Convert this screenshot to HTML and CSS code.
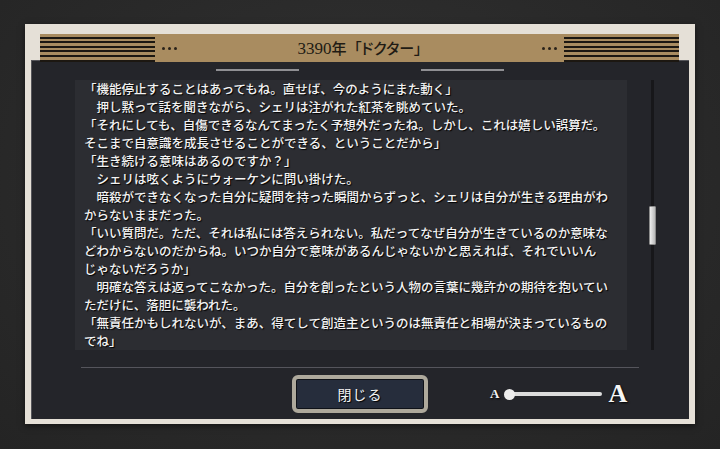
FILE: index.html
```html
<!DOCTYPE html>
<html lang="ja">
<head>
    <meta charset="UTF-8">
    <meta name="viewport" content="width=device-width, initial-scale=1.0">
    <title>3390年 「ドクター」</title>
    <link rel="stylesheet" href="styles.css">
</head>
<body>
    <div class="frame">
        <div class="header">
            <div class="stripes"></div>
            <div class="dots"><span></span><span></span><span></span></div>
            <h1 class="title"><span class="num">3390</span>年 <span class="name">「ドクター」</span></h1>
            <div class="dots"><span></span><span></span><span></span></div>
            <div class="stripes"></div>
        </div>
        <div class="panel">
            <div class="deco"><span></span><span></span></div>
            <div class="reader">
                <div class="text">
                    <p>「機能停止することはあってもね。直せば、今のようにまた動く」</p>
                    <p>　押し黙って話を聞きながら、シェリは注がれた紅茶を眺めていた。</p>
                    <p>「それにしても、自傷できるなんてまったく予想外だったね。しかし、これは嬉しい誤算だ。<br>そこまで自意識を成長させることができる、ということだから」</p>
                    <p>「生き続ける意味はあるのですか？」</p>
                    <p>　シェリは呟くようにウォーケンに問い掛けた。</p>
                    <p>　暗殺ができなくなった自分に疑問を持った瞬間からずっと、シェリは自分が生きる理由がわ<br>からないままだった。</p>
                    <p>「いい質問だ。ただ、それは私には答えられない。私だってなぜ自分が生きているのか意味な<br>どわからないのだからね。いつか自分で意味があるんじゃないかと思えれば、それでいいん<br>じゃないだろうか」</p>
                    <p>　明確な答えは返ってこなかった。自分を創ったという人物の言葉に幾許かの期待を抱いてい<br>ただけに、落胆に襲われた。</p>
                    <p>「無責任かもしれないが、まあ、得てして創造主というのは無責任と相場が決まっているもの<br>でね」</p>
                </div>
                <div class="scrollbar">
                    <div class="thumb"></div>
                </div>
            </div>
            <div class="separator"></div>
            <div class="controls">
                <button class="close-btn">閉じる</button>
                <div class="size-slider">
                    <span class="size-small">A</span>
                    <span class="knob"></span>
                    <span class="track"></span>
                    <span class="size-big">A</span>
                </div>
            </div>
        </div>
    </div>
</body>
</html>
```

FILE: styles.css
```css
body {
    margin: 0;
    width: 720px;
    height: 449px;
    overflow: hidden;
    background: radial-gradient(ellipse at 50% 40%, #323232 0%, #2a2a2a 55%, #242424 100%);
    font-family: "Noto Sans CJK JP", sans-serif;
}
.frame {
    box-sizing: border-box;
    width: 670px;
    height: 400px;
    margin: 24px 0 0 25px;
    padding: 10px 6px 5px 6px;
    background: #e5e0d7;
    box-shadow: 0 2px 6px rgba(0, 0, 0, 0.5);
}
.header {
    position: relative;
    z-index: 1;
    display: flex;
    align-items: center;
    height: 28px;
    margin: 0 10px 0 9px;
    background: #a98c60;
}
.stripes {
    width: 115px;
    height: 100%;
    background: repeating-linear-gradient(to bottom, #a98c60 0, #a98c60 2.6px, #1c1711 2.6px, #1c1711 4.6px);
}
.dots {
    display: flex;
    gap: 3px;
    margin: 0 7px;
}
.dots span {
    width: 3px;
    height: 3px;
    border-radius: 50%;
    background: #2a221a;
}
.title {
    flex: 1;
    margin: 0;
    text-align: center;
    font-size: 15px;
    font-weight: 500;
    color: #211b14;
    font-feature-settings: "palt";
}
.title .num {
    font-family: "Liberation Serif", serif;
    font-size: 17px;
}
.title .name {
    margin-left: 4px;
}
.panel {
    display: flex;
    flex-direction: column;
    height: 359px;
    margin-top: -2px;
    padding: 9px 0 6px 0;
    box-sizing: border-box;
    background: #24252a;
    box-shadow: inset 1px 1px 0 #55555a;
}
.deco {
    display: flex;
    justify-content: center;
    gap: 122px;
    height: 2px;
}
.deco span {
    width: 83px;
    background: #8f8f93;
}
.reader {
    display: flex;
    gap: 22px;
    height: 270px;
    margin: 9px 0 0 44px;
}
.text {
    box-sizing: border-box;
    width: 552px;
    height: 270px;
    overflow: hidden;
    padding: 0 0 0 9px;
    background: #2c2d32;
    color: #f3f3f3;
    font-size: 12.5px;
    font-weight: 500;
    line-height: 18px;
    white-space: nowrap;
    text-shadow: 1px 1px 1px #000;
}
.text p {
    margin: 0;
}
.scrollbar {
    position: relative;
    width: 7px;
    height: 270px;
    background: linear-gradient(to right, transparent 2px, #17171a 2px, #17171a 5px, transparent 5px);
}
.thumb {
    position: absolute;
    top: 126px;
    left: 0;
    width: 7px;
    height: 39px;
    box-sizing: border-box;
    border: 1px solid #8c8c8c;
    border-radius: 1px;
    background: linear-gradient(to right, #eeeeee, #b9b9b9);
}
.separator {
    height: 1px;
    margin: 17px 50px 0 50px;
    background: #55555c;
}
.controls {
    display: grid;
    grid-template-columns: 1fr 136px 1fr;
    height: 38px;
    margin-top: 7px;
}
.close-btn {
    grid-column: 2;
    box-sizing: border-box;
    width: 136px;
    height: 38px;
    padding: 0;
    border: 4px solid #aea99c;
    border-radius: 6px;
    background: #262d3c;
    box-shadow: inset 0 0 0 1px #0f1218;
    color: #f4f4f4;
    font-family: "Noto Sans CJK JP", sans-serif;
    font-size: 14px;
    letter-spacing: 1px;
    text-shadow: 1px 1px 1px #000;
}
.size-slider {
    display: flex;
    align-items: center;
    padding-left: 62px;
}
.size-small,
.size-big {
    font-family: "Liberation Serif", serif;
    font-weight: bold;
    color: #f5f5f5;
    text-shadow: 1px 1px 2px #000;
}
.size-small {
    font-size: 13px;
}
.size-big {
    margin-left: 6px;
    font-size: 26px;
}
.knob {
    position: relative;
    z-index: 1;
    width: 11px;
    height: 11px;
    margin-left: 5px;
    border-radius: 50%;
    background: #ededed;
}
.track {
    width: 90px;
    height: 4px;
    margin-left: -3px;
    border-radius: 2px;
    background: #dcdcdc;
}
```
